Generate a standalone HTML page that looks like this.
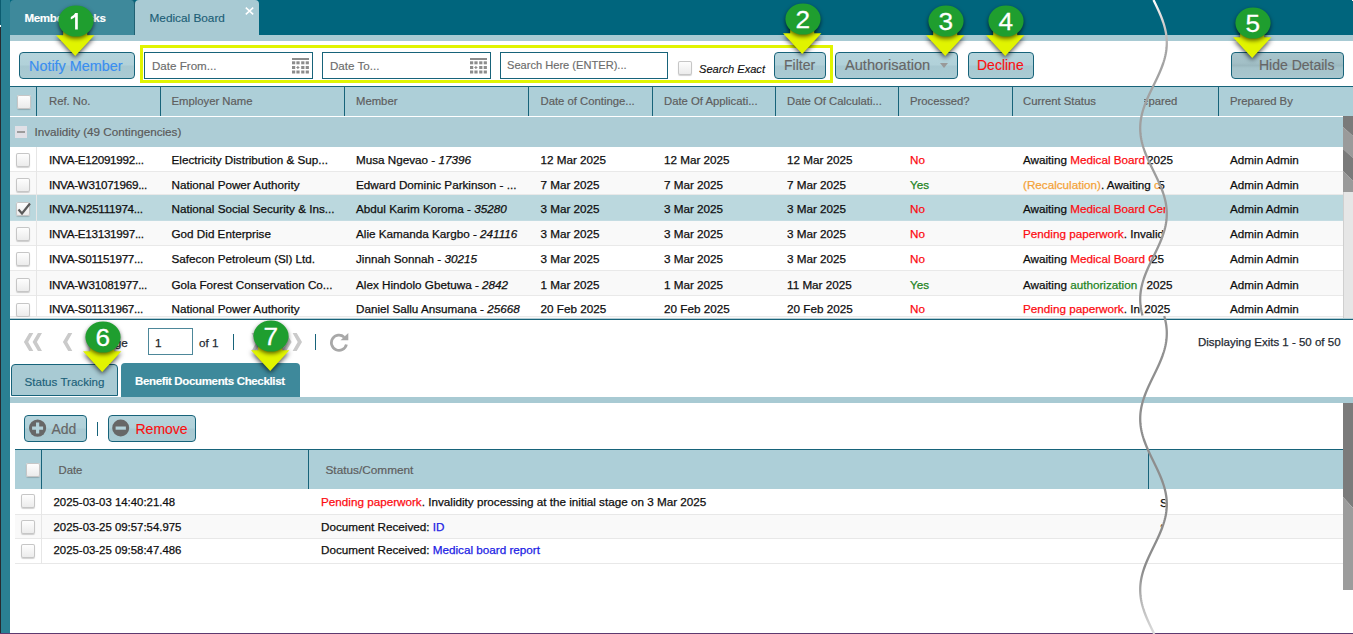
<!DOCTYPE html>
<html><head><meta charset="utf-8">
<style>
*{box-sizing:border-box}
html,body{margin:0;padding:0;background:#fff;overflow:hidden}
body{width:1353px;height:634px;position:relative;font-family:"Liberation Sans",sans-serif;color:#111}
.a{position:absolute}
.t{position:absolute;white-space:nowrap;line-height:1;-webkit-text-stroke:0.15px currentColor}
.btn{position:absolute;border:1px solid #17637a;border-radius:4px;background:linear-gradient(#b5d4dc 0%,#b1d1d9 48%,#a7c8d1 52%,#aacbd3 100%);}
.inp{position:absolute;border:1px solid #17637a;background:#fff}
.cb{position:absolute;width:14px;height:14px;border-radius:2px;background:linear-gradient(#fff,#eaeaea);box-shadow:0 0 0 1px #c6c6c6 inset,0 1px 1px rgba(0,0,0,.18)}
.hdr{position:absolute;background:#adcfd8}
.vd{position:absolute;width:1px;background:#17637a}
.row{position:absolute;left:10px;width:1333px;border-bottom:1px solid #e9e9e9}
.ht{position:absolute;white-space:nowrap;line-height:1;font-size:11.3px;color:#5e5e5e;-webkit-text-stroke:0.2px currentColor}
.dt{position:absolute;white-space:nowrap;line-height:1;font-size:11.7px;color:#0e0e0e;-webkit-text-stroke:0.25px currentColor}
.red{color:#fc0c12}.grn{color:#1f8424}.org{color:#f4a33a}.blu{color:#1c1ce4}
</style></head><body>
<div class="a" style="left:0;top:0;width:1353px;height:35px;background:#00657d"></div>
<div class="a" style="left:0;top:35px;width:1353px;height:6px;background:#a8cad3"></div>
<div class="a" style="left:1352px;top:0;width:1px;height:1px;background:#fff"></div>
<div class="a" style="left:0;top:0;width:10px;height:634px;background:#2a8093"></div>
<div class="a" style="left:0;top:0;width:1px;height:634px;background:#262b30"></div>
<div class="a" style="left:0;top:0;width:1px;height:25px;background:#0b5c70"></div>
<div class="a" style="left:0;top:25px;width:1px;height:2px;background:#fff"></div>
<div class="a" style="left:10px;top:0;width:125px;height:35px;background:#3e899b;border-radius:4px 4px 0 0;border-right:1px solid #1f6072"></div>
<div class="t" style="left:24.5px;top:12px;font-size:11.6px;font-weight:bold;color:#fff;letter-spacing:-0.4px">Members Tasks</div>
<div class="a" style="left:135px;top:0;width:124px;height:35px;background:#a8cad3;border-radius:4px 4px 0 0"></div>
<div class="t" style="left:149.5px;top:12.8px;font-size:11.8px;color:#1c5e76">Medical Board</div>
<svg class="a" style="left:245px;top:6.5px" width="9" height="8" viewBox="0 0 9 8"><path d="M0.8 0.6 L8.2 7.4 M8.2 0.6 L0.8 7.4" stroke="#fff" stroke-width="1.5"/></svg>
<div class="btn" style="left:19px;top:52px;width:116px;height:27px"></div>
<div class="t" style="left:29px;top:58.5px;font-size:14.4px;color:#3a8ef0">Notify Member</div>
<div class="a" style="left:140px;top:45px;width:693px;height:38px;border:3px solid #e1f400"></div>
<div class="inp" style="left:144px;top:52px;width:169px;height:27px"></div>
<div class="t" style="left:152px;top:60px;font-size:11.6px;color:#6c6c6c">Date From...</div>
<div class="inp" style="left:322px;top:52px;width:169px;height:27px"></div>
<div class="t" style="left:330px;top:60px;font-size:11.6px;color:#6c6c6c">Date To...</div>
<div class="inp" style="left:500px;top:52px;width:168px;height:27px"></div>
<div class="t" style="left:507px;top:60px;font-size:11.1px;color:#6c6c6c">Search Here (ENTER)...</div>
<div class="cb" style="left:678px;top:61px"></div>
<div class="t" style="left:699px;top:63.5px;font-size:11.1px;font-style:italic;color:#111">Search Exact</div>
<div class="btn" style="left:774px;top:52px;width:52px;height:27px"></div>
<div class="t" style="left:784px;top:58px;font-size:14px;color:#666">Filter</div>
<div class="btn" style="left:835px;top:52px;width:123px;height:27px"></div>
<div class="t" style="left:845px;top:58px;font-size:14.6px;color:#666">Authorisation</div>
<div class="a" style="left:940px;top:63px;width:0;height:0;border-left:4px solid transparent;border-right:4px solid transparent;border-top:5px solid #999"></div>
<div class="btn" style="left:968px;top:52px;width:66px;height:27px"></div>
<div class="t" style="left:977px;top:58px;font-size:14px;color:#fa1010">Decline</div>
<div class="btn" style="left:1231px;top:52px;width:113px;height:27px;background:linear-gradient(#a9c5cc 0%,#a2bfc6 40%,#9bb8bf 50%,#a5c3ca 60%,#a9c7ce 100%)"></div>
<div class="t" style="left:1259px;top:58px;font-size:14px;color:#666">Hide Details</div>
<svg class="a" style="left:291.5px;top:57.5px" width="18" height="17" viewBox="0 0 18 17"><rect x="0" y="0" width="17" height="2" fill="#8c8c8c"/><rect x="0" y="3.3" width="3.2" height="3" fill="#8c8c8c"/><rect x="4.4" y="3.3" width="3.2" height="3" fill="#8c8c8c"/><rect x="9.2" y="3.3" width="3.2" height="3" fill="#8c8c8c"/><rect x="13.7" y="3.3" width="3.2" height="3" fill="#8c8c8c"/><rect x="0" y="8" width="3.2" height="3" fill="#8c8c8c"/><path d="M5.9 8 V11 M4.4 9.5 H7.4" stroke="#8c8c8c" stroke-width="1.2"/><rect x="9.2" y="8" width="3.2" height="3" fill="#8c8c8c"/><rect x="13.7" y="8" width="3.2" height="3" fill="#8c8c8c"/><rect x="0" y="12.5" width="3.2" height="3" fill="#8c8c8c"/><rect x="4.4" y="12.5" width="3.2" height="3" fill="#8c8c8c"/><rect x="9.2" y="12.5" width="3.2" height="3" fill="#8c8c8c"/><rect x="13.7" y="12.5" width="3.2" height="3" fill="#8c8c8c"/></svg>
<svg class="a" style="left:469.5px;top:57.5px" width="18" height="17" viewBox="0 0 18 17"><rect x="0" y="0" width="17" height="2" fill="#8c8c8c"/><rect x="0" y="3.3" width="3.2" height="3" fill="#8c8c8c"/><rect x="4.4" y="3.3" width="3.2" height="3" fill="#8c8c8c"/><rect x="9.2" y="3.3" width="3.2" height="3" fill="#8c8c8c"/><rect x="13.7" y="3.3" width="3.2" height="3" fill="#8c8c8c"/><rect x="0" y="8" width="3.2" height="3" fill="#8c8c8c"/><path d="M5.9 8 V11 M4.4 9.5 H7.4" stroke="#8c8c8c" stroke-width="1.2"/><rect x="9.2" y="8" width="3.2" height="3" fill="#8c8c8c"/><rect x="13.7" y="8" width="3.2" height="3" fill="#8c8c8c"/><rect x="0" y="12.5" width="3.2" height="3" fill="#8c8c8c"/><rect x="4.4" y="12.5" width="3.2" height="3" fill="#8c8c8c"/><rect x="9.2" y="12.5" width="3.2" height="3" fill="#8c8c8c"/><rect x="13.7" y="12.5" width="3.2" height="3" fill="#8c8c8c"/></svg>
<div class="a" style="left:10px;top:86px;width:1343px;height:1px;background:#17637a"></div>
<div class="hdr" style="left:10px;top:87px;width:1343px;height:29px"></div>
<div class="cb" style="left:16.5px;top:94.5px"></div>
<div class="vd" style="left:36px;top:87px;height:29px"></div>
<div class="vd" style="left:160px;top:87px;height:29px"></div>
<div class="vd" style="left:344px;top:87px;height:29px"></div>
<div class="vd" style="left:528px;top:87px;height:29px"></div>
<div class="vd" style="left:652px;top:87px;height:29px"></div>
<div class="vd" style="left:775px;top:87px;height:29px"></div>
<div class="vd" style="left:898px;top:87px;height:29px"></div>
<div class="vd" style="left:1012px;top:87px;height:29px"></div>
<div class="vd" style="left:1218px;top:87px;height:29px"></div>
<div class="ht" style="left:49px;top:96px">Ref. No.</div>
<div class="ht" style="left:171.5px;top:96px">Employer Name</div>
<div class="ht" style="left:356px;top:96px">Member</div>
<div class="ht" style="left:540.5px;top:96px">Date of Continge...</div>
<div class="ht" style="left:664px;top:96px">Date Of Applicati...</div>
<div class="ht" style="left:787px;top:96px">Date Of Calculati...</div>
<div class="ht" style="left:910px;top:96px">Processed?</div>
<div class="ht" style="left:1230px;top:96px">Prepared By</div>
<div class="a" style="left:10px;top:116px;width:1343px;height:1px;background:#fff"></div>
<div class="a" style="left:10px;top:117px;width:1333px;height:30px;background:#adcdd6"></div>
<div class="a" style="left:15px;top:126px;width:12px;height:12px;background:#e0e0e6"></div>
<div class="a" style="left:17px;top:131px;width:8px;height:2px;background:#9c9c9c"></div>
<div class="ht" style="left:34.5px;top:125.8px;font-size:11.7px;color:#5a5a5a">Invalidity (49 Contingencies)</div>
<div class="row" style="top:147px;height:25px;background:#fff"></div>
<div class="a" style="left:36px;top:147px;width:1px;height:25px;background:#e6e6e6"></div>
<div class="cb" style="left:16px;top:153px"></div>
<div class="dt" style="left:49px;top:153.7px;letter-spacing:-0.3px">INVA-E12091992...</div>
<div class="dt" style="left:171.5px;top:153.7px">Electricity Distribution &amp; Sup...</div>
<div class="dt" style="left:356px;top:153.7px">Musa Ngevao - <i>17396</i></div>
<div class="dt" style="left:540.5px;top:153.7px">12 Mar 2025</div>
<div class="dt" style="left:664px;top:153.7px">12 Mar 2025</div>
<div class="dt" style="left:787px;top:153.7px">12 Mar 2025</div>
<div class="dt" style="left:910px;top:153.7px"><span class="red">No</span></div>
<div class="dt" style="left:1230px;top:153.7px">Admin Admin</div>
<div class="row" style="top:172px;height:23px;background:#f9f9f9"></div>
<div class="a" style="left:36px;top:172px;width:1px;height:23px;background:#e6e6e6"></div>
<div class="cb" style="left:16px;top:178px"></div>
<div class="dt" style="left:49px;top:178.5px;letter-spacing:-0.3px">INVA-W31071969...</div>
<div class="dt" style="left:171.5px;top:178.5px">National Power Authority</div>
<div class="dt" style="left:356px;top:178.5px">Edward Dominic Parkinson - ...</div>
<div class="dt" style="left:540.5px;top:178.5px">7 Mar 2025</div>
<div class="dt" style="left:664px;top:178.5px">7 Mar 2025</div>
<div class="dt" style="left:787px;top:178.5px">7 Mar 2025</div>
<div class="dt" style="left:910px;top:178.5px"><span class="grn">Yes</span></div>
<div class="dt" style="left:1230px;top:178.5px">Admin Admin</div>
<div class="row" style="top:195px;height:26px;background:#bbd8de;border-bottom-color:#c4dce2"></div>
<div class="a" style="left:36px;top:195px;width:1px;height:26px;background:#e6e6e6"></div>
<div class="cb" style="left:16px;top:202px"></div>
<svg class="a" style="left:16px;top:201px" width="16" height="16" viewBox="0 0 16 16"><path d="M2.5 8.5 L6 12.5 L14 2.5" stroke="#5a5a5a" stroke-width="2.2" fill="none"/></svg>
<div class="dt" style="left:49px;top:202.7px;letter-spacing:-0.3px">INVA-N25111974...</div>
<div class="dt" style="left:171.5px;top:202.7px">National Social Security &amp; Ins...</div>
<div class="dt" style="left:356px;top:202.7px">Abdul Karim Koroma - <i>35280</i></div>
<div class="dt" style="left:540.5px;top:202.7px">3 Mar 2025</div>
<div class="dt" style="left:664px;top:202.7px">3 Mar 2025</div>
<div class="dt" style="left:787px;top:202.7px">3 Mar 2025</div>
<div class="dt" style="left:910px;top:202.7px"><span class="red">No</span></div>
<div class="dt" style="left:1230px;top:202.7px">Admin Admin</div>
<div class="row" style="top:221px;height:25px;background:#f9f9f9"></div>
<div class="a" style="left:36px;top:221px;width:1px;height:25px;background:#e6e6e6"></div>
<div class="cb" style="left:16px;top:227px"></div>
<div class="dt" style="left:49px;top:227.8px;letter-spacing:-0.3px">INVA-E13131997...</div>
<div class="dt" style="left:171.5px;top:227.8px">God Did Enterprise</div>
<div class="dt" style="left:356px;top:227.8px">Alie Kamanda Kargbo - <i>241116</i></div>
<div class="dt" style="left:540.5px;top:227.8px">3 Mar 2025</div>
<div class="dt" style="left:664px;top:227.8px">3 Mar 2025</div>
<div class="dt" style="left:787px;top:227.8px">3 Mar 2025</div>
<div class="dt" style="left:910px;top:227.8px"><span class="red">No</span></div>
<div class="dt" style="left:1230px;top:227.8px">Admin Admin</div>
<div class="row" style="top:246px;height:25px;background:#fff"></div>
<div class="a" style="left:36px;top:246px;width:1px;height:25px;background:#e6e6e6"></div>
<div class="cb" style="left:16px;top:252px"></div>
<div class="dt" style="left:49px;top:252.7px;letter-spacing:-0.3px">INVA-S01151977...</div>
<div class="dt" style="left:171.5px;top:252.7px">Safecon Petroleum (Sl) Ltd.</div>
<div class="dt" style="left:356px;top:252.7px">Jinnah Sonnah - <i>30215</i></div>
<div class="dt" style="left:540.5px;top:252.7px">3 Mar 2025</div>
<div class="dt" style="left:664px;top:252.7px">3 Mar 2025</div>
<div class="dt" style="left:787px;top:252.7px">3 Mar 2025</div>
<div class="dt" style="left:910px;top:252.7px"><span class="red">No</span></div>
<div class="dt" style="left:1230px;top:252.7px">Admin Admin</div>
<div class="row" style="top:271px;height:25px;background:#f9f9f9"></div>
<div class="a" style="left:36px;top:271px;width:1px;height:25px;background:#e6e6e6"></div>
<div class="cb" style="left:16px;top:278px"></div>
<div class="dt" style="left:49px;top:278.7px;letter-spacing:-0.3px">INVA-W31081977...</div>
<div class="dt" style="left:171.5px;top:278.7px">Gola Forest Conservation Co...</div>
<div class="dt" style="left:356px;top:278.7px">Alex Hindolo Gbetuwa - <i>2842</i></div>
<div class="dt" style="left:540.5px;top:278.7px">1 Mar 2025</div>
<div class="dt" style="left:664px;top:278.7px">1 Mar 2025</div>
<div class="dt" style="left:787px;top:278.7px">11 Mar 2025</div>
<div class="dt" style="left:910px;top:278.7px"><span class="grn">Yes</span></div>
<div class="dt" style="left:1230px;top:278.7px">Admin Admin</div>
<div class="row" style="top:296px;height:21px;background:#fff"></div>
<div class="a" style="left:36px;top:296px;width:1px;height:21px;background:#e6e6e6"></div>
<div class="cb" style="left:16px;top:303px"></div>
<div class="dt" style="left:49px;top:303.2px;letter-spacing:-0.3px">INVA-S01131967...</div>
<div class="dt" style="left:171.5px;top:303.2px">National Power Authority</div>
<div class="dt" style="left:356px;top:303.2px">Daniel Sallu Ansumana - <i>25668</i></div>
<div class="dt" style="left:540.5px;top:303.2px">20 Feb 2025</div>
<div class="dt" style="left:664px;top:303.2px">20 Feb 2025</div>
<div class="dt" style="left:787px;top:303.2px">20 Feb 2025</div>
<div class="dt" style="left:910px;top:303.2px"><span class="red">No</span></div>
<div class="dt" style="left:1230px;top:303.2px">Admin Admin</div>
<div class="a" style="left:10px;top:317px;width:1333px;height:1px;background:#f8f8f8"></div>
<div class="a" style="left:10px;top:318px;width:1343px;height:1px;background:#b4ccd3"></div>
<div class="a" style="left:10px;top:319px;width:1343px;height:1px;background:#17637a"></div>
<svg class="a" style="left:0;top:0;overflow:visible" width="1" height="1"><polygon points="29.2,333 33.3,333 28.2,342 33.3,351 29.2,351 23.9,342" fill="#cacaca"/><polygon points="37.9,333 42.0,333 36.9,342 42.0,351 37.9,351 32.6,342" fill="#cacaca"/><polygon points="68.2,333 72.3,333 67.2,342 72.3,351 68.2,351 62.9,342" fill="#cacaca"/><polygon points="255.6,333 251.5,333 256.6,342 251.5,351 255.6,351 260.9,342" fill="#cacaca"/><polygon points="286.3,333 282.2,333 287.3,342 282.2,351 286.3,351 291.59999999999997,342" fill="#cacaca"/><polygon points="296.70000000000005,333 292.6,333 297.70000000000005,342 292.6,351 296.70000000000005,351 302.0,342" fill="#cacaca"/></svg>
<div class="dt" style="left:100.5px;top:337px;color:#1f2a33">Page</div>
<div class="inp" style="left:148px;top:328px;width:45px;height:27px;border-color:#4d8799"></div>
<div class="dt" style="left:155px;top:337px;color:#222">1</div>
<div class="dt" style="left:199px;top:336.5px;color:#1f2a33">of 1</div>
<div class="a" style="left:233px;top:334px;width:1px;height:16px;background:#17637a"></div>
<div class="a" style="left:315px;top:334px;width:1px;height:16px;background:#17637a"></div>
<svg class="a" style="left:329px;top:332px" width="21" height="20" viewBox="0 0 21 20"><path d="M15.2 5.2 A7.6 7.6 0 1 0 17.4 12.5" stroke="#a8a8a8" stroke-width="2.8" fill="none"/><path d="M11.5 8.2 L19.3 8.2 L19.3 1 Z" fill="#a8a8a8"/></svg>
<div class="dt" style="left:1198px;top:337px;font-size:11.5px;color:#1f2a33">Displaying Exits 1 - 50 of 50</div>
<div class="a" style="left:11px;top:364px;width:107px;height:32px;background:#a8cad3;border:1px solid #17637a;border-radius:4px 4px 0 0"></div>
<div class="t" style="left:24.5px;top:376px;font-size:11.6px;color:#1b6078">Status Tracking</div>
<div class="a" style="left:121px;top:363px;width:179px;height:34px;background:#3e899b;border-radius:4px 4px 0 0"></div>
<div class="t" style="left:135px;top:375.5px;font-size:11.5px;font-weight:bold;color:#fff;letter-spacing:-0.35px">Benefit Documents Checklist</div>
<div class="a" style="left:10px;top:397px;width:1343px;height:6px;background:#a8cad3"></div>
<div class="btn" style="left:24px;top:415px;width:63px;height:27px"></div>
<svg class="a" style="left:29px;top:420px;overflow:visible" width="18" height="18" viewBox="0 0 18 18"><circle cx="8.6" cy="8.1" r="8.6" fill="#676767"/><path d="M8.6 2.6 V13.6 M3.1 8.1 H14.1" stroke="#b3d2da" stroke-width="3.2"/></svg>
<div class="t" style="left:51.5px;top:421.5px;font-size:14px;color:#666">Add</div>
<div class="a" style="left:97px;top:422px;width:1px;height:14px;background:#17637a"></div>
<div class="btn" style="left:108px;top:415px;width:88px;height:27px"></div>
<svg class="a" style="left:112px;top:420px;overflow:visible" width="18" height="18" viewBox="0 0 18 18"><circle cx="8.7" cy="8.1" r="8.5" fill="#676767"/><path d="M3.6 8.1 H13.9" stroke="#b3d2da" stroke-width="3.2"/></svg>
<div class="t" style="left:135.5px;top:421.5px;font-size:14px;color:#fa1010">Remove</div>
<div class="a" style="left:15px;top:449px;width:1328px;height:1px;background:#17637a"></div>
<div class="hdr" style="left:15px;top:450px;width:1328px;height:39px"></div>
<div class="cb" style="left:26px;top:462.5px"></div>
<div class="vd" style="left:41px;top:450px;height:39px"></div>
<div class="vd" style="left:308px;top:450px;height:39px"></div>
<div class="vd" style="left:1148px;top:450px;height:39px"></div>
<div class="ht" style="left:58.5px;top:465px">Date</div>
<div class="ht" style="left:325.5px;top:464.8px;font-size:11.8px">Status/Comment</div>
<div class="a" style="left:15px;top:489px;width:1328px;height:26px;background:#fff;border-bottom:1px solid #e8e8e8"></div>
<div class="a" style="left:41px;top:489px;width:1px;height:26px;background:#e6e6e6"></div>
<div class="cb" style="left:21px;top:494px"></div>
<div class="dt" style="left:53.5px;top:496.6px;font-size:11.4px">2025-03-03 14:40:21.48</div>
<div class="dt" style="left:321px;top:496.1px"><span class="red">Pending paperwork</span>. Invalidity processing at the initial stage on 3 Mar 2025</div>
<div class="a" style="left:15px;top:515px;width:1328px;height:24px;background:#f9f9f9;border-bottom:1px solid #e8e8e8"></div>
<div class="a" style="left:41px;top:515px;width:1px;height:24px;background:#e6e6e6"></div>
<div class="cb" style="left:21px;top:520px"></div>
<div class="dt" style="left:53.5px;top:521.5600000000001px;font-size:11.4px">2025-03-25 09:57:54.975</div>
<div class="dt" style="left:321px;top:521.0600000000001px">Document Received: <span class="blu">ID</span></div>
<div class="a" style="left:15px;top:539px;width:1328px;height:25px;background:#fff;border-bottom:1px solid #e8e8e8"></div>
<div class="a" style="left:41px;top:539px;width:1px;height:25px;background:#e6e6e6"></div>
<div class="cb" style="left:21px;top:544px"></div>
<div class="dt" style="left:53.5px;top:544.6px;font-size:11.4px">2025-03-25 09:58:47.486</div>
<div class="dt" style="left:321px;top:544.1px">Document Received: <span class="blu">Medical board report</span></div>
<div class="a" style="left:0;top:633px;width:1353px;height:1px;background:#5c3a70"></div>
<svg class="a" style="left:1343px;top:116px" width="10" height="202" viewBox="0 0 10 202">
<rect x="0" y="0" width="10" height="202" fill="#e6e6e6"/><rect x="0" y="76" width="1" height="126" fill="#cfcfcf"/>
<polygon points="0,0 10,0 10,20 0,11" fill="#7a7a7a"/>
<polygon points="0,11 10,20 10,42 0,33" fill="#9a9a9a"/>
<polygon points="0,33 10,42 10,65 0,55" fill="#7a7a7a"/>
<polygon points="0,55 10,65 10,76 0,76" fill="#9a9a9a"/>
</svg>
<svg class="a" style="left:1343px;top:403px" width="10" height="187" viewBox="0 0 10 187">
<polygon points="0,0 10,0 10,105 0,94" fill="#7b7b7b"/>
<polygon points="0,94 10,105 10,187 0,187" fill="#9c9c9c"/>
</svg>
<div class="a" style="left:0;top:0;width:1353px;height:634px;clip-path:polygon(0px 0px,1152.3px 0px,1153.3px 2px,1154.2px 4px,1155.2px 6px,1156.2px 8px,1157.1px 10px,1158.0px 12px,1158.8px 14px,1159.7px 16px,1160.5px 18px,1161.2px 20px,1161.9px 22px,1162.6px 24px,1163.2px 26px,1163.7px 28px,1164.2px 30px,1164.6px 32px,1164.9px 34px,1165.2px 36px,1165.4px 38px,1165.5px 40px,1165.6px 42px,1165.6px 44px,1165.5px 46px,1165.4px 48px,1165.1px 50px,1164.8px 52px,1164.5px 54px,1164.1px 56px,1163.6px 58px,1163.0px 60px,1162.4px 62px,1161.7px 64px,1161.0px 66px,1160.3px 68px,1159.5px 70px,1158.6px 72px,1157.8px 74px,1156.8px 76px,1155.9px 78px,1155.0px 80px,1154.0px 82px,1153.0px 84px,1152.1px 86px,1151.1px 88px,1150.1px 90px,1149.2px 92px,1148.2px 94px,1147.3px 96px,1146.4px 98px,1145.5px 100px,1144.7px 102px,1143.9px 104px,1143.2px 106px,1142.5px 108px,1141.9px 110px,1141.3px 112px,1140.8px 114px,1140.3px 116px,1139.9px 118px,1139.6px 120px,1139.3px 122px,1139.2px 124px,1139.0px 126px,1139.0px 128px,1139.0px 130px,1139.1px 132px,1139.3px 134px,1139.5px 136px,1139.8px 138px,1140.2px 140px,1140.7px 142px,1141.2px 144px,1141.7px 146px,1142.4px 148px,1143.0px 150px,1143.8px 152px,1144.5px 154px,1145.3px 156px,1146.2px 158px,1147.1px 160px,1148.0px 162px,1148.9px 164px,1149.9px 166px,1150.8px 168px,1151.8px 170px,1152.8px 172px,1153.8px 174px,1154.7px 176px,1155.7px 178px,1156.6px 180px,1157.5px 182px,1158.4px 184px,1159.3px 186px,1160.1px 188px,1160.8px 190px,1161.6px 192px,1162.2px 194px,1162.9px 196px,1163.4px 198px,1163.9px 200px,1164.4px 202px,1164.8px 204px,1165.1px 206px,1165.3px 208px,1165.5px 210px,1165.6px 212px,1165.6px 214px,1165.6px 216px,1165.4px 218px,1165.3px 220px,1165.0px 222px,1164.7px 224px,1164.3px 226px,1163.8px 228px,1163.3px 230px,1162.7px 232px,1162.1px 234px,1161.4px 236px,1160.7px 238px,1159.9px 240px,1159.1px 242px,1158.2px 244px,1157.3px 246px,1156.4px 248px,1155.4px 250px,1154.5px 252px,1153.5px 254px,1152.5px 256px,1151.6px 258px,1150.6px 260px,1149.6px 262px,1148.7px 264px,1147.8px 266px,1146.8px 268px,1146.0px 270px,1145.1px 272px,1144.3px 274px,1143.6px 276px,1142.9px 278px,1142.2px 280px,1141.6px 282px,1141.0px 284px,1140.5px 286px,1140.1px 288px,1139.8px 290px,1139.5px 292px,1139.2px 294px,1139.1px 296px,1139.0px 298px,1139.0px 300px,1139.1px 302px,1139.2px 304px,1139.4px 306px,1139.7px 308px,1140.0px 310px,1140.4px 312px,1140.9px 314px,1141.4px 316px,1142.0px 318px,1163.6px 318px,1164.1px 320px,1164.5px 322px,1164.8px 324px,1165.1px 326px,1165.4px 328px,1165.5px 330px,1165.6px 332px,1165.6px 334px,1165.5px 336px,1165.4px 338px,1165.2px 340px,1164.9px 342px,1164.6px 344px,1164.2px 346px,1163.7px 348px,1163.2px 350px,1162.6px 352px,1161.9px 354px,1161.2px 356px,1160.5px 358px,1159.7px 360px,1158.8px 362px,1158.0px 364px,1157.1px 366px,1156.2px 368px,1155.2px 370px,1154.2px 372px,1153.3px 374px,1152.3px 376px,1151.3px 378px,1150.4px 380px,1149.4px 382px,1148.4px 384px,1147.5px 386px,1146.6px 388px,1145.8px 390px,1144.9px 392px,1144.1px 394px,1143.4px 396px,1142.7px 398px,1142.0px 400px,1141.4px 402px,1140.9px 404px,1140.4px 406px,1140.0px 408px,1139.7px 410px,1139.4px 412px,1139.2px 414px,1139.1px 416px,1139.0px 418px,1139.0px 420px,1139.1px 422px,1139.2px 424px,1139.5px 426px,1139.8px 428px,1140.1px 430px,1140.5px 432px,1141.0px 434px,1141.6px 436px,1142.2px 438px,1142.9px 440px,1143.6px 442px,1144.3px 444px,1145.1px 446px,1146.0px 448px,1146.8px 450px,1147.8px 452px,1148.7px 454px,1149.6px 456px,1150.6px 458px,1151.6px 460px,1152.5px 462px,1153.5px 464px,1154.5px 466px,1155.4px 468px,1156.4px 470px,1157.3px 472px,1158.2px 474px,1159.1px 476px,1159.9px 478px,1160.7px 480px,1161.4px 482px,1162.1px 484px,1162.7px 486px,1163.3px 488px,1163.8px 490px,1164.3px 492px,1164.7px 494px,1165.0px 496px,1165.3px 498px,1165.4px 500px,1165.6px 502px,1165.6px 504px,1165.6px 506px,1165.5px 508px,1165.3px 510px,1165.1px 512px,1164.8px 514px,1164.4px 516px,1163.9px 518px,1163.4px 520px,1162.9px 522px,1162.2px 524px,1161.6px 526px,1160.8px 528px,1160.1px 530px,1159.3px 532px,1158.4px 534px,1157.5px 536px,1156.6px 538px,1155.7px 540px,1154.7px 542px,1153.8px 544px,1152.8px 546px,1151.8px 548px,1150.8px 550px,1149.9px 552px,1148.9px 554px,1148.0px 556px,1147.1px 558px,1146.2px 560px,1145.3px 562px,1144.5px 564px,1143.8px 566px,1143.0px 568px,1142.4px 570px,1141.7px 572px,1141.2px 574px,1140.7px 576px,1140.2px 578px,1139.8px 580px,1139.5px 582px,1139.3px 584px,1139.1px 586px,1139.0px 588px,1139.0px 590px,1139.0px 592px,1139.2px 594px,1139.3px 596px,1139.6px 598px,1139.9px 600px,1140.3px 602px,1140.8px 604px,1141.3px 606px,1141.9px 608px,1142.5px 610px,1143.2px 612px,1143.9px 614px,1144.7px 616px,1145.5px 618px,1146.4px 620px,1147.3px 622px,1148.2px 624px,1149.2px 626px,1150.1px 628px,1151.1px 630px,1152.1px 632px,1153.0px 634px,0px 634px)">
<div class="ht" style="left:1023px;top:96px">Current Status</div>
<div class="dt" style="left:1023px;top:153.7px">Awaiting <span class="red">Medical Board Cert</span></div>
<div class="dt" style="left:1023px;top:178.5px"><span class="org">(Recalculation)</span>. Awaiting <span class="org">calc</span></div>
<div class="dt" style="left:1023px;top:202.7px">Awaiting <span class="red">Medical Board Cert</span></div>
<div class="dt" style="left:1023px;top:227.8px"><span class="red">Pending paperwork</span>. Invalidity</div>
<div class="dt" style="left:1023px;top:252.7px">Awaiting <span class="red">Medical Board Cert</span></div>
<div class="dt" style="left:1023px;top:278.7px">Awaiting <span class="grn">authorization</span></div>
<div class="dt" style="left:1023px;top:303.2px"><span class="red">Pending paperwork</span>. Invalidity</div>
<div class="dt" style="left:1160px;top:497px">System</div>
<div class="dt" style="left:1160px;top:521.8px">System</div>
</div>
<div class="ht" style="left:1144px;top:96px;width:40px;overflow:hidden"><span style="margin-left:-13.2px">Prepared</span></div>
<div class="dt" style="left:1147px;top:153.7px">2025</div>
<div class="dt" style="left:1158.2px;top:178.5px">5</div>
<div class="dt" style="left:1151px;top:252.7px">25</div>
<div class="dt" style="left:1146.5px;top:278.7px">2025</div>
<div class="dt" style="left:1144.2px;top:303.2px">2025</div>
<svg class="a" style="left:50.5px;top:1.3999999999999986px;overflow:visible" width="50" height="62" viewBox="0 0 50 62">
<path d="M12.2 20 H36.2 V34.2 H43.4 L24.2 55 L5 34.2 H12.2 Z" fill="#e1f400" style="filter:drop-shadow(0.5px 2.5px 2.5px rgba(0,0,0,.7))"/>
<ellipse cx="25" cy="20" rx="17.6" ry="15.6" fill="#1f9e2f" style="filter:drop-shadow(0.5px 2px 2px rgba(0,0,0,.6))"/>
<path d="M26.8 11.9 H24.2 Q23 14.6 19.8 16 V18.4 Q22.6 17.5 24.1 16.1 V28.4 H26.8 Z" fill="#fff"/>
</svg>
<svg class="a" style="left:777.5px;top:-0.6000000000000014px;overflow:visible" width="50" height="62" viewBox="0 0 50 62">
<path d="M12.2 20 H36.2 V34.2 H43.4 L24.2 55 L5 34.2 H12.2 Z" fill="#e1f400" style="filter:drop-shadow(0.5px 2.5px 2.5px rgba(0,0,0,.7))"/>
<ellipse cx="25" cy="20" rx="17.6" ry="15.6" fill="#1f9e2f" style="filter:drop-shadow(0.5px 2px 2px rgba(0,0,0,.6))"/>
<g transform="translate(25 29.4) scale(1.14 1)"><text x="-0.3" y="0" text-anchor="middle" font-family="Liberation Sans" font-size="23" fill="#fff" stroke="#fff" stroke-width="0.25">2</text></g>
</svg>
<svg class="a" style="left:920.5px;top:1.3999999999999986px;overflow:visible" width="50" height="62" viewBox="0 0 50 62">
<path d="M12.2 20 H36.2 V34.2 H43.4 L24.2 55 L5 34.2 H12.2 Z" fill="#e1f400" style="filter:drop-shadow(0.5px 2.5px 2.5px rgba(0,0,0,.7))"/>
<ellipse cx="25" cy="20" rx="17.6" ry="15.6" fill="#1f9e2f" style="filter:drop-shadow(0.5px 2px 2px rgba(0,0,0,.6))"/>
<g transform="translate(25 29.4) scale(1.14 1)"><text x="-0.3" y="0" text-anchor="middle" font-family="Liberation Sans" font-size="23" fill="#fff" stroke="#fff" stroke-width="0.25">3</text></g>
</svg>
<svg class="a" style="left:980.6px;top:1.3999999999999986px;overflow:visible" width="50" height="62" viewBox="0 0 50 62">
<path d="M12.2 20 H36.2 V34.2 H43.4 L24.2 55 L5 34.2 H12.2 Z" fill="#e1f400" style="filter:drop-shadow(0.5px 2.5px 2.5px rgba(0,0,0,.7))"/>
<ellipse cx="25" cy="20" rx="17.6" ry="15.6" fill="#1f9e2f" style="filter:drop-shadow(0.5px 2px 2px rgba(0,0,0,.6))"/>
<g transform="translate(25 29.4) scale(1.14 1)"><text x="-0.3" y="0" text-anchor="middle" font-family="Liberation Sans" font-size="23" fill="#fff" stroke="#fff" stroke-width="0.25">4</text></g>
</svg>
<svg class="a" style="left:1227.5px;top:3.3000000000000007px;overflow:visible" width="50" height="62" viewBox="0 0 50 62">
<path d="M12.2 20 H36.2 V34.2 H43.4 L24.2 55 L5 34.2 H12.2 Z" fill="#e1f400" style="filter:drop-shadow(0.5px 2.5px 2.5px rgba(0,0,0,.7))"/>
<ellipse cx="25" cy="20" rx="17.6" ry="15.6" fill="#1f9e2f" style="filter:drop-shadow(0.5px 2px 2px rgba(0,0,0,.6))"/>
<g transform="translate(25 29.4) scale(1.14 1)"><text x="-0.3" y="0" text-anchor="middle" font-family="Liberation Sans" font-size="23" fill="#fff" stroke="#fff" stroke-width="0.25">5</text></g>
</svg>
<svg class="a" style="left:77.5px;top:316.5px;overflow:visible" width="50" height="62" viewBox="0 0 50 62">
<path d="M12.2 20 H36.2 V34.2 H43.4 L24.2 55 L5 34.2 H12.2 Z" fill="#e1f400" style="filter:drop-shadow(0.5px 2.5px 2.5px rgba(0,0,0,.7))"/>
<ellipse cx="25" cy="20" rx="17.6" ry="15.6" fill="#1f9e2f" style="filter:drop-shadow(0.5px 2px 2px rgba(0,0,0,.6))"/>
<g transform="translate(25 29.4) scale(1.14 1)"><text x="-0.3" y="0" text-anchor="middle" font-family="Liberation Sans" font-size="23" fill="#fff" stroke="#fff" stroke-width="0.25">6</text></g>
</svg>
<svg class="a" style="left:246.39999999999998px;top:315.8px;overflow:visible" width="50" height="62" viewBox="0 0 50 62">
<path d="M12.2 20 H36.2 V34.2 H43.4 L24.2 55 L5 34.2 H12.2 Z" fill="#e1f400" style="filter:drop-shadow(0.5px 2.5px 2.5px rgba(0,0,0,.7))"/>
<ellipse cx="25" cy="20" rx="17.6" ry="15.6" fill="#1f9e2f" style="filter:drop-shadow(0.5px 2px 2px rgba(0,0,0,.6))"/>
<g transform="translate(25 29.4) scale(1.14 1)"><text x="-0.3" y="0" text-anchor="middle" font-family="Liberation Sans" font-size="23" fill="#fff" stroke="#fff" stroke-width="0.25">7</text></g>
</svg>
<svg class="a" style="left:0;top:0" width="1353" height="634" viewBox="0 0 1353 634">
<defs><linearGradient id="wg" gradientUnits="userSpaceOnUse" x1="0" y1="0" x2="0" y2="634">
<stop offset="0" stop-color="#ffffff"/><stop offset="0.035" stop-color="#d6d0d0"/><stop offset="0.08" stop-color="#a4a4a4"/><stop offset="0.3" stop-color="#9c9c9c"/><stop offset="0.6" stop-color="#8f8f8f"/><stop offset="0.9" stop-color="#8c8c8c"/><stop offset="0.95" stop-color="#b8b8b8"/><stop offset="1" stop-color="#dcdcdc"/></linearGradient></defs>
<path d="M1153.50 0.00 L1154.48 2.00 L1155.45 4.00 L1156.41 6.00 L1157.35 8.00 L1158.28 10.00 L1159.18 12.00 L1160.04 14.00 L1160.88 16.00 L1161.67 18.00 L1162.42 20.00 L1163.12 22.00 L1163.77 24.00 L1164.36 26.00 L1164.89 28.00 L1165.37 30.00 L1165.78 32.00 L1166.12 34.00 L1166.39 36.00 L1166.60 38.00 L1166.73 40.00 L1166.79 42.00 L1166.79 44.00 L1166.71 46.00 L1166.55 48.00 L1166.33 50.00 L1166.04 52.00 L1165.68 54.00 L1165.25 56.00 L1164.77 58.00 L1164.22 60.00 L1163.61 62.00 L1162.95 64.00 L1162.23 66.00 L1161.47 68.00 L1160.67 70.00 L1159.83 72.00 L1158.95 74.00 L1158.05 76.00 L1157.12 78.00 L1156.17 80.00 L1155.21 82.00 L1154.23 84.00 L1153.26 86.00 L1152.28 88.00 L1151.31 90.00 L1150.35 92.00 L1149.41 94.00 L1148.50 96.00 L1147.60 98.00 L1146.74 100.00 L1145.92 102.00 L1145.14 104.00 L1144.40 106.00 L1143.71 108.00 L1143.08 110.00 L1142.50 112.00 L1141.98 114.00 L1141.52 116.00 L1141.13 118.00 L1140.81 120.00 L1140.55 122.00 L1140.36 124.00 L1140.25 126.00 L1140.20 128.00 L1140.23 130.00 L1140.33 132.00 L1140.50 134.00 L1140.74 136.00 L1141.04 138.00 L1141.42 140.00 L1141.86 142.00 L1142.37 144.00 L1142.93 146.00 L1143.55 148.00 L1144.23 150.00 L1144.95 152.00 L1145.72 154.00 L1146.54 156.00 L1147.39 158.00 L1148.27 160.00 L1149.18 162.00 L1150.12 164.00 L1151.07 166.00 L1152.04 168.00 L1153.01 170.00 L1153.99 172.00 L1154.96 174.00 L1155.93 176.00 L1156.88 178.00 L1157.82 180.00 L1158.73 182.00 L1159.61 184.00 L1160.46 186.00 L1161.28 188.00 L1162.05 190.00 L1162.77 192.00 L1163.45 194.00 L1164.07 196.00 L1164.63 198.00 L1165.14 200.00 L1165.58 202.00 L1165.96 204.00 L1166.26 206.00 L1166.50 208.00 L1166.67 210.00 L1166.77 212.00 L1166.80 214.00 L1166.75 216.00 L1166.64 218.00 L1166.45 220.00 L1166.19 222.00 L1165.87 224.00 L1165.48 226.00 L1165.02 228.00 L1164.50 230.00 L1163.92 232.00 L1163.29 234.00 L1162.60 236.00 L1161.86 238.00 L1161.08 240.00 L1160.26 242.00 L1159.40 244.00 L1158.50 246.00 L1157.59 248.00 L1156.65 250.00 L1155.69 252.00 L1154.72 254.00 L1153.74 256.00 L1152.77 258.00 L1151.79 260.00 L1150.83 262.00 L1149.88 264.00 L1148.95 266.00 L1148.05 268.00 L1147.17 270.00 L1146.33 272.00 L1145.53 274.00 L1144.77 276.00 L1144.05 278.00 L1143.39 280.00 L1142.78 282.00 L1142.23 284.00 L1141.75 286.00 L1141.32 288.00 L1140.96 290.00 L1140.67 292.00 L1140.45 294.00 L1140.29 296.00 L1140.21 298.00 L1140.21 300.00 L1140.27 302.00 L1140.40 304.00 L1140.61 306.00 L1140.88 308.00 L1141.22 310.00 L1141.63 312.00 L1142.11 314.00 L1142.50 315.50" stroke="url(#wg)" stroke-width="2.3" fill="none"/>
<path d="M1164.22 316.00 L1164.77 318.00 L1165.25 320.00 L1165.68 322.00 L1166.04 324.00 L1166.33 326.00 L1166.55 328.00 L1166.71 330.00 L1166.79 332.00 L1166.79 334.00 L1166.73 336.00 L1166.60 338.00 L1166.39 340.00 L1166.12 342.00 L1165.78 344.00 L1165.37 346.00 L1164.89 348.00 L1164.36 350.00 L1163.77 352.00 L1163.12 354.00 L1162.42 356.00 L1161.67 358.00 L1160.88 360.00 L1160.04 362.00 L1159.18 364.00 L1158.28 366.00 L1157.35 368.00 L1156.41 370.00 L1155.45 372.00 L1154.48 374.00 L1153.50 376.00 L1152.52 378.00 L1151.55 380.00 L1150.59 382.00 L1149.65 384.00 L1148.72 386.00 L1147.82 388.00 L1146.96 390.00 L1146.12 392.00 L1145.33 394.00 L1144.58 396.00 L1143.88 398.00 L1143.23 400.00 L1142.64 402.00 L1142.11 404.00 L1141.63 406.00 L1141.22 408.00 L1140.88 410.00 L1140.61 412.00 L1140.40 414.00 L1140.27 416.00 L1140.21 418.00 L1140.21 420.00 L1140.29 422.00 L1140.45 424.00 L1140.67 426.00 L1140.96 428.00 L1141.32 430.00 L1141.75 432.00 L1142.23 434.00 L1142.78 436.00 L1143.39 438.00 L1144.05 440.00 L1144.77 442.00 L1145.53 444.00 L1146.33 446.00 L1147.17 448.00 L1148.05 450.00 L1148.95 452.00 L1149.88 454.00 L1150.83 456.00 L1151.79 458.00 L1152.77 460.00 L1153.74 462.00 L1154.72 464.00 L1155.69 466.00 L1156.65 468.00 L1157.59 470.00 L1158.50 472.00 L1159.40 474.00 L1160.26 476.00 L1161.08 478.00 L1161.86 480.00 L1162.60 482.00 L1163.29 484.00 L1163.92 486.00 L1164.50 488.00 L1165.02 490.00 L1165.48 492.00 L1165.87 494.00 L1166.19 496.00 L1166.45 498.00 L1166.64 500.00 L1166.75 502.00 L1166.80 504.00 L1166.77 506.00 L1166.67 508.00 L1166.50 510.00 L1166.26 512.00 L1165.96 514.00 L1165.58 516.00 L1165.14 518.00 L1164.63 520.00 L1164.07 522.00 L1163.45 524.00 L1162.77 526.00 L1162.05 528.00 L1161.28 530.00 L1160.46 532.00 L1159.61 534.00 L1158.73 536.00 L1157.82 538.00 L1156.88 540.00 L1155.93 542.00 L1154.96 544.00 L1153.99 546.00 L1153.01 548.00 L1152.04 550.00 L1151.07 552.00 L1150.12 554.00 L1149.18 556.00 L1148.27 558.00 L1147.39 560.00 L1146.54 562.00 L1145.72 564.00 L1144.95 566.00 L1144.23 568.00 L1143.55 570.00 L1142.93 572.00 L1142.37 574.00 L1141.86 576.00 L1141.42 578.00 L1141.04 580.00 L1140.74 582.00 L1140.50 584.00 L1140.33 586.00 L1140.23 588.00 L1140.20 590.00 L1140.25 592.00 L1140.36 594.00 L1140.55 596.00 L1140.81 598.00 L1141.13 600.00 L1141.52 602.00 L1141.98 604.00 L1142.50 606.00 L1143.08 608.00 L1143.71 610.00 L1144.40 612.00 L1145.14 614.00 L1145.92 616.00 L1146.74 618.00 L1147.60 620.00 L1148.50 622.00 L1149.41 624.00 L1150.35 626.00 L1151.31 628.00 L1152.28 630.00 L1153.26 632.00 L1154.23 634.00" stroke="url(#wg)" stroke-width="2.3" fill="none"/>
</svg>
</body></html>
